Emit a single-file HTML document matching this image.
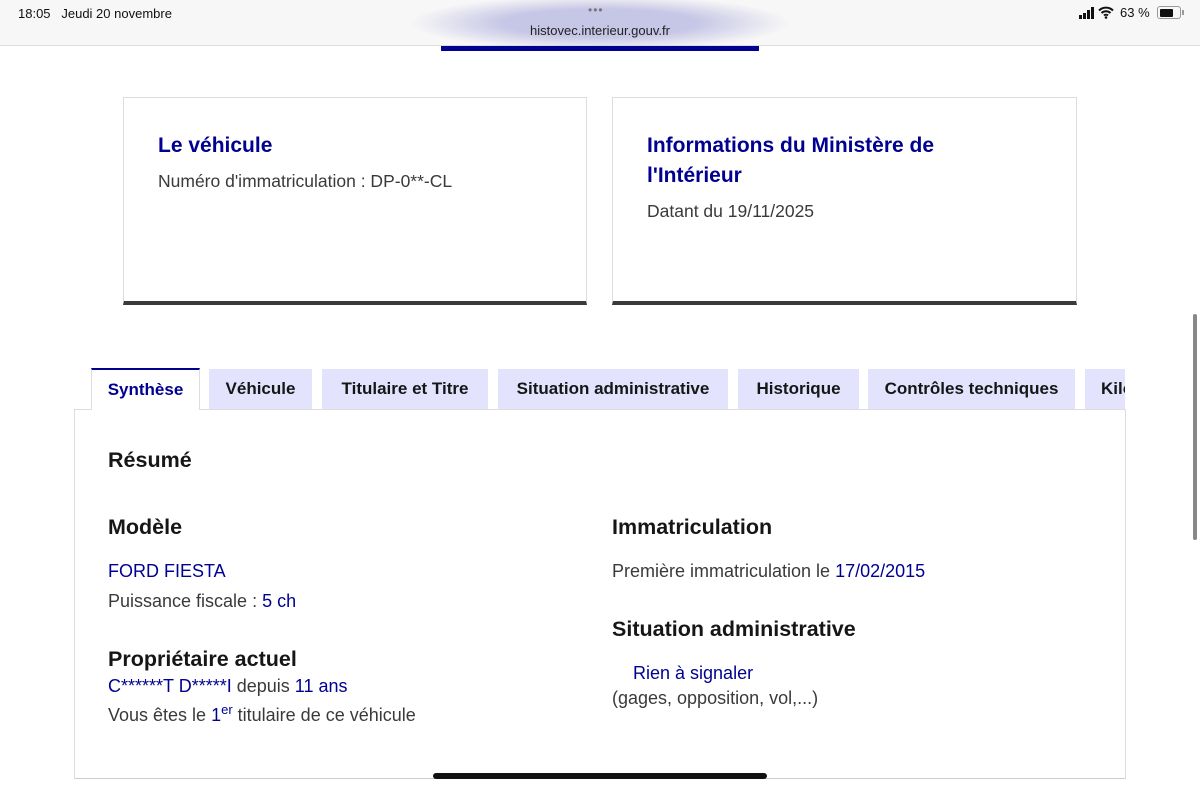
<!DOCTYPE html>
<html><head><meta charset="utf-8">
<style>
*{margin:0;padding:0;box-sizing:border-box}
body{width:1200px;height:788px;overflow:hidden;background:#fff;font-family:"Liberation Sans",sans-serif;color:#1e1e1e;position:relative}
.abs{position:absolute}
.top{left:0;top:0;width:1200px;height:46px;background:#f7f7f7;border-bottom:1px solid #ddd}
.glow{left:410px;top:0;width:380px;height:46px;background:radial-gradient(ellipse 50% 60% at center,#c6c6e6 50%,rgba(247,247,247,0) 100%)}
.card{border:1px solid #ddd;border-bottom:4px solid #3a3a3a;background:#fff}
.card h2{color:#000091;font-size:21px;font-weight:bold;line-height:30px}
.card p{font-size:17.5px;color:#3a3a3a;margin-top:10px}
.tab{top:369px;height:40px;background:#e3e3fd;font-size:17px;font-weight:bold;color:#161616;line-height:40px;text-align:center}
h3{font-size:21.5px;font-weight:bold;color:#161616}
.t{font-size:18px;color:#3a3a3a}
.blue{color:#000091}
</style></head><body>
<div class="abs top"></div>
<div class="abs glow"></div>
<div class="abs" style="left:18px;top:6px;font-size:13px;color:#111">18:05&nbsp;&nbsp;&nbsp;Jeudi 20 novembre</div>
<div class="abs" style="left:588px;top:3px;font-size:12px;color:#777;letter-spacing:1px">•••</div>
<div class="abs" style="left:0;width:1200px;text-align:center;top:23px;font-size:13px;color:#222">histovec.interieur.gouv.fr</div>
<div class="abs" style="left:441px;top:46px;width:318px;height:5px;background:#000091"></div>
<div class="abs" style="left:1079px;top:6px;width:100px;height:14px">
 <span class="abs" style="left:0;top:9px;width:3px;height:4px;background:#111"></span>
 <span class="abs" style="left:4px;top:7px;width:3px;height:6px;background:#111"></span>
 <span class="abs" style="left:8px;top:4px;width:3px;height:9px;background:#111"></span>
 <span class="abs" style="left:12px;top:1px;width:3px;height:12px;background:#111"></span>
 <svg class="abs" style="left:19px;top:0" width="16" height="13" viewBox="0 0 16 13"><path d="M1 4.5a10 10 0 0 1 14 0M3.5 7a6.5 6.5 0 0 1 9 0M6 9.5a3 3 0 0 1 4 0" stroke="#111" stroke-width="2" fill="none"/><circle cx="8" cy="11.5" r="1.3" fill="#111"/></svg>
 <span class="abs" style="left:41px;top:-1px;font-size:13px;color:#111">63 %</span>
</div>
<div class="abs" style="left:1157px;top:6px;width:24px;height:13px;border:1px solid #999;border-radius:3px"><div style="margin:1.5px;width:13px;height:8px;background:#111;border-radius:1px"></div></div>
<div class="abs" style="left:1182px;top:10px;width:2px;height:5px;background:#999"></div>

<div class="abs card" style="left:123px;top:97px;width:464px;height:208px;padding:33px 34px">
 <h2>Le véhicule</h2><p>Numéro d'immatriculation : DP-0**-CL</p></div>
<div class="abs card" style="left:612px;top:97px;width:465px;height:208px;padding:33px 34px">
 <h2 style="width:310px">Informations du Ministère de l'Intérieur</h2><p>Datant du 19/11/2025</p></div>

<div class="abs" style="left:74px;top:409px;width:1052px;height:370px;border:1px solid #ddd;border-bottom:1px solid #ccc"></div>
<div class="abs tab" style="left:91px;top:368px;width:109px;height:42px;background:#fff;border:1px solid #ddd;border-top:2px solid #000091;border-bottom:none;color:#000091">Synthèse</div>
<div class="abs tab" style="left:209px;width:103px">Véhicule</div>
<div class="abs tab" style="left:322px;width:166px">Titulaire et Titre</div>
<div class="abs tab" style="left:498px;width:230px">Situation administrative</div>
<div class="abs tab" style="left:738px;width:121px">Historique</div>
<div class="abs tab" style="left:868px;width:207px">Contrôles techniques</div>
<div class="abs tab" style="left:1085px;width:40px;overflow:hidden;text-align:left;padding-left:16px">Kilo</div>

<h3 class="abs" style="left:108px;top:448px">Résumé</h3>
<h3 class="abs" style="left:108px;top:515px">Modèle</h3>
<div class="abs t blue" style="left:108px;top:561px">FORD FIESTA</div>
<div class="abs t" style="left:108px;top:591px">Puissance fiscale : <span class="blue">5 ch</span></div>
<h3 class="abs" style="left:108px;top:647px">Propriétaire actuel</h3>
<div class="abs t" style="left:108px;top:676px"><span class="blue">C******T D*****I</span> depuis <span class="blue">11 ans</span></div>
<div class="abs t" style="left:108px;top:702px">Vous êtes le <span class="blue">1<sup style="font-size:13px">er</sup></span> titulaire de ce véhicule</div>

<h3 class="abs" style="left:612px;top:515px">Immatriculation</h3>
<div class="abs t" style="left:612px;top:561px">Première immatriculation le <span class="blue">17/02/2015</span></div>
<h3 class="abs" style="left:612px;top:617px">Situation administrative</h3>
<div class="abs t blue" style="left:633px;top:663px">Rien à signaler</div>
<div class="abs t" style="left:612px;top:688px">(gages, opposition, vol,...)</div>

<div class="abs" style="left:433px;top:773px;width:334px;height:6px;border-radius:3px;background:#111"></div>
<div class="abs" style="left:1193px;top:314px;width:4px;height:226px;border-radius:2px;background:#888"></div>
</body></html>
